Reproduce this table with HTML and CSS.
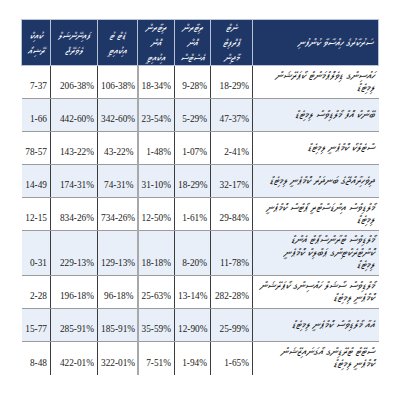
FILE: index.html
```html
<!DOCTYPE html>
<html lang="dv">
<head>
<meta charset="utf-8">
<link rel="stylesheet" href="styles.css">
</head>
<body>
<table class="ratios" dir="rtl">
  <colgroup>
    <col class="c-name"><col class="c2"><col class="c3"><col class="c4"><col class="c5"><col class="c6"><col class="c7">
  </colgroup>
  <thead>
    <tr>
      <th class="h-name">ސަރުކާރުގެ ހިއްސާވާ ކުންފުނި</th>
      <th>ނެޓް<br>ޕްރޮފިޓް<br>މާޖިން</th>
      <th>ރިޓާރން<br>އޮން<br>އެސެޓްސް</th>
      <th>ރިޓާރން<br>އޮން<br>އިކުއިޓީ</th>
      <th>ޑެޓް ޓު<br>އިކުއިޓީ</th>
      <th>ފައިނޭންޝަލް<br>ލެވަރޭޖް</th>
      <th>ކުއިކް<br>ރޭޝިއޯ</th>
    </tr>
  </thead>
  <tbody>
    <tr class="row">
      <td class="name">ހައުސިންގ ޑިވެލޮޕްމަންޓް ކޯޕަރޭޝަން ލިމިޓެޑް</td>
      <td class="num">18-29%</td><td class="num">9-28%</td><td class="num">18-34%</td><td class="num">106-38%</td><td class="num">206-38%</td><td class="num">7-37</td>
    </tr>
    <tr class="row alt">
      <td class="name">ބޭންކް އޮފް މޯލްޑިވްސް ލިމިޓެޑް</td>
      <td class="num">47-37%</td><td class="num">5-29%</td><td class="num">23-54%</td><td class="num">342-60%</td><td class="num">442-60%</td><td class="num">1-66</td>
    </tr>
    <tr class="row">
      <td class="name">ސްޓެލްކޯ ކޮމްޕެނީ ލިމިޓެޑް</td>
      <td class="num">2-41%</td><td class="num">1-07%</td><td class="num">1-48%</td><td class="num">43-22%</td><td class="num">143-22%</td><td class="num">78-57</td>
    </tr>
    <tr class="row alt">
      <td class="name">ދިވެހިރާއްޖޭގެ ބަނދަރު ކޮމްޕެނީ ލިމިޓެޑް</td>
      <td class="num">32-17%</td><td class="num">18-29%</td><td class="num">31-10%</td><td class="num">74-31%</td><td class="num">174-31%</td><td class="num">14-49</td>
    </tr>
    <tr class="row">
      <td class="name">މޯލްޑިވްސް އިންޑަސްޓްރީ ޕޯޓްސް ކޮމްޕެނީ ލިމިޓެޑް</td>
      <td class="num">29-84%</td><td class="num">1-61%</td><td class="num">12-50%</td><td class="num">734-26%</td><td class="num">834-26%</td><td class="num">12-15</td>
    </tr>
    <tr class="row alt tall">
      <td class="name narrow">މޯލްޑިވްސް ޓްރާންސްޕޯޓް އެންޑް ކޮންޓްރެކްޓިންގ ޕަބްލިކް ކޮމްޕެނީ ލިމިޓެޑް</td>
      <td class="num">11-78%</td><td class="num">8-20%</td><td class="num">18-18%</td><td class="num">129-13%</td><td class="num">229-13%</td><td class="num">0-31</td>
    </tr>
    <tr class="row">
      <td class="name">މޯލްޑިވްސް ސޯޝަލް ހައުސިންގ ކޯޕަރޭޝަން ކޮމްޕެނީ ލިމިޓެޑް</td>
      <td class="num">282-28%</td><td class="num">13-14%</td><td class="num">25-63%</td><td class="num">96-18%</td><td class="num">196-18%</td><td class="num">2-28</td>
    </tr>
    <tr class="row alt">
      <td class="name">އެއާ މޯލްޑިވްސް ކޮމްޕެނީ ލިމިޓެޑް</td>
      <td class="num">25-99%</td><td class="num">12-90%</td><td class="num">35-59%</td><td class="num">185-91%</td><td class="num">285-91%</td><td class="num">15-77</td>
    </tr>
    <tr class="row">
      <td class="name">ސްޓޭޓް ޓްރޭޑިންގ އޯގަނައިޒޭޝަން ކޮމްޕެނީ ލިމިޓެޑް</td>
      <td class="num">1-65%</td><td class="num">1-94%</td><td class="num">7-51%</td><td class="num">322-01%</td><td class="num">422-01%</td><td class="num">8-48</td>
    </tr>
  </tbody>
</table>
</body>
</html>
```

FILE: styles.css
```css
html, body {
  margin: 0;
  padding: 0;
  background: #ffffff;
}

body {
  font-family: "Noto Sans Thaana", "MV Faruma", "FreeSerif", "FreeSans", "DejaVu Sans", "Liberation Serif", serif;
}

.ratios {
  margin: 19px 0 0 21px;
  width: 357px;
  table-layout: fixed;
  border-collapse: collapse;
  font-style: italic;
}

.c-name { width: 126px; }
.c2 { width: 42px; }
.c3 { width: 36px; }
.c4 { width: 37px; }
.c5 { width: 40px; }
.c6 { width: 47px; }
.c7 { width: 29px; }

.ratios thead tr {
  height: 46px;
}

.ratios th {
  background: #1f3767;
  color: #ffffff;
  font-weight: normal;
  font-size: 10px;
  line-height: 15px;
  text-align: center;
  vertical-align: middle;
  padding: 0 1px;
  border: 1px solid #b9c3d6;
  white-space: nowrap;
}

.ratios th.h-name {
  font-size: 10.5px;
  text-align: right;
  padding-right: 5px;
}

.row {
  height: 33px;
}

.row.tall {
  height: 45px;
}

.row.alt td {
  background: #e9eff8;
}

.ratios td {
  border-top: 1px solid #9c9c9c;
  border-bottom: 1px solid #9c9c9c;
  border-left: 1px solid #3c3c3c;
  border-right: 1px solid #3c3c3c;
  padding: 0 3px;
  color: #1a1a1a;
}

.ratios td:first-child {
  border-right: none;
}

.ratios td:last-child {
  border-left: none;
}

.ratios td:nth-child(4) {
  border-left: 2px solid #a8a8a8;
}

.ratios td.name {
  font-size: 11px;
  line-height: 12.5px;
  text-align: right;
  vertical-align: middle;
  padding: 1px 4px 1px 6px;
}

.ratios td.name.narrow {
  padding-left: 14px;
}

.ratios td.num {
  font-family: "Liberation Serif", serif;
  font-style: normal;
  font-size: 9.3px;
  direction: ltr;
  text-align: right;
  vertical-align: bottom;
  padding-bottom: 7px;
  padding-right: 3px;
  white-space: nowrap;
}

.ratios tbody tr:last-child td {
  border-bottom: none;
}
```
